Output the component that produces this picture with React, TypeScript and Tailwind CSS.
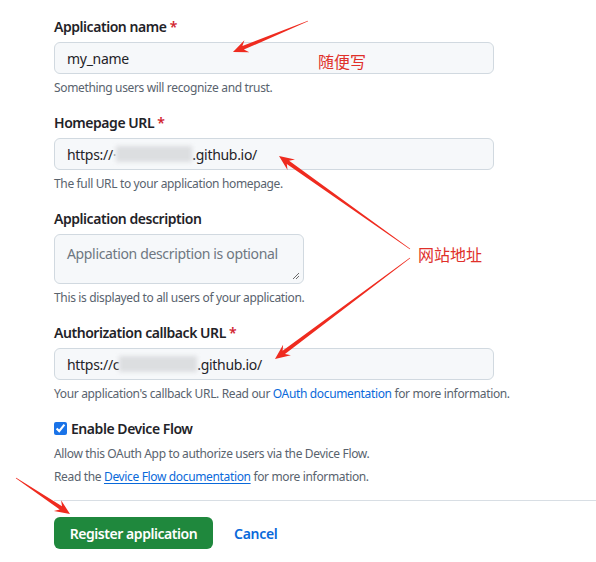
import React from "react";

const font = { fontFamily: '"Noto Sans", "Noto Sans CJK SC", sans-serif' };

type Pt = [number, number];

// tapered red annotation arrow, tail -> tip
const arrowPoints = (tail: Pt, tip: Pt, shaft = 4, headLen = 15, headW = 13) => {
  const dx = tip[0] - tail[0];
  const dy = tip[1] - tail[1];
  const len = Math.hypot(dx, dy);
  const ux = dx / len;
  const uy = dy / len;
  const nx = -uy;
  const ny = ux;
  const bx = tip[0] - ux * headLen;
  const by = tip[1] - uy * headLen;
  const nb = tip[0] - ux * (headLen - 4);
  const nbY = tip[1] - uy * (headLen - 4);
  const p = (x: number, y: number) => `${x.toFixed(1)},${y.toFixed(1)}`;
  return [
    p(tail[0] + nx * 0.3, tail[1] + ny * 0.3),
    p(nb + (nx * shaft) / 2, nbY + (ny * shaft) / 2),
    p(bx + (nx * headW) / 2, by + (ny * headW) / 2),
    p(tip[0], tip[1]),
    p(bx - (nx * headW) / 2, by - (ny * headW) / 2),
    p(nb - (nx * shaft) / 2, nbY - (ny * shaft) / 2),
    p(tail[0] - nx * 0.3, tail[1] - ny * 0.3),
  ].join(" ");
};

const Arrows = () => (
  <svg className="absolute inset-0 pointer-events-none" width={596} height={562}>
    <polygon points={arrowPoints([308, 21], [233, 52])} fill="#ef2b1f" />
    <polygon points={arrowPoints([410, 249], [279, 156])} fill="#ef2b1f" />
    <polygon points={arrowPoints([410, 258], [275, 359])} fill="#ef2b1f" />
    <polygon points={arrowPoints([16, 478], [70, 514])} fill="#ef2b1f" />
  </svg>
);

const Label = ({ text, required }: { text: string; required?: boolean }) => (
  <div className="text-[14px] leading-[21px] font-semibold tracking-[-0.45px] text-[#1f2328]">
    {text}
    {required && <span className="text-[#d1242f]"> *</span>}
  </div>
);

const Help = ({ children }: { children: React.ReactNode }) => (
  <div className="mt-[5px] text-[12px] leading-[18px] tracking-[-0.35px] text-[#59636e]">{children}</div>
);

const Blur = ({ w }: { w: number }) => (
  <span
    className="inline-block h-[16px] align-middle bg-[#dcdee0] blur-[2px]"
    style={{ width: w }}
  />
);

const Input = ({ children }: { children: React.ReactNode }) => (
  <div className="mt-[5px] flex items-center w-[440px] h-[32px] px-[12px] rounded-[6px] border border-[#d1d9e0] bg-[#f6f8fa] text-[14px] tracking-[-0.3px] text-[#1f2328]">
    {children}
  </div>
);

export default function App() {
  return (
    <div className="relative w-[596px] h-[562px] bg-white overflow-hidden" style={font}>
      <div className="pl-[54px] pt-[16px]">
        <Label text="Application name" required />
        <Input>my_name</Input>
        <Help>Something users will recognize and trust.</Help>

        <div className="mt-[15px]">
          <Label text="Homepage URL" required />
          <Input>
            <span>https://</span>
            <span className="text-[#9aa0a6]">·</span>
            <Blur w={76} />
            <span>.github.io/</span>
          </Input>
          <Help>The full URL to your application homepage.</Help>
        </div>

        <div className="mt-[15px]">
          <Label text="Application description" />
          <div className="relative mt-[5px] w-[250px] h-[50px] rounded-[6px] border border-[#d1d9e0] bg-[#f6f8fa] px-[12px] pt-[8px] text-[14px] tracking-[-0.35px] text-[#6e7781]">
            Application description is optional
            <svg className="absolute right-[3px] bottom-[3px]" width="8" height="8" viewBox="0 0 8 8">
              <path d="M1 7 L7 1 M4 7 L7 4" stroke="#6b6b6b" strokeWidth="1" />
            </svg>
          </div>
          <Help>This is displayed to all users of your application.</Help>
        </div>

        <div className="mt-[15px]">
          <Label text="Authorization callback URL" required />
          <Input>
            <span>https://c</span>
            <Blur w={78} />
            <span>.github.io/</span>
          </Input>
          <Help>
            Your application's callback URL. Read our{" "}
            <span className="text-[#0969da]">OAuth documentation</span> for more information.
          </Help>
        </div>

        <div className="mt-[15px] flex items-center gap-[4px]">
          <input type="checkbox" defaultChecked readOnly className="w-[13px] h-[13px] m-0 accent-[#1a73e8]" />
          <span className="text-[14px] leading-[21px] font-semibold tracking-[-0.45px] text-[#1f2328]">Enable Device Flow</span>
        </div>
        <div className="mt-[6px] text-[12px] leading-[18px] tracking-[-0.35px] text-[#59636e]">
          Allow this OAuth App to authorize users via the Device Flow.
        </div>
        <div className="mt-[5px] text-[12px] leading-[18px] tracking-[-0.35px] text-[#59636e]">
          Read the{" "}
          <span className="text-[#0969da] underline underline-offset-2">Device Flow documentation</span> for more
          information.
        </div>

        <div className="mt-[14px] border-t border-[#d8dee4]" />

        <div className="mt-[16px] flex items-center gap-[21px]">
          <div className="h-[32px] w-[159px] flex items-center justify-center rounded-[6px] bg-[#1f883d] text-white text-[14px] font-semibold tracking-[-0.45px]">
            Register application
          </div>
          <span className="text-[14px] font-semibold tracking-[-0.3px] text-[#0969da]">Cancel</span>
        </div>
      </div>

      <Arrows />
      <div className="absolute left-[318px] top-[50px] text-[16px] leading-[24px] text-[#e0302a]">随便写</div>
      <div className="absolute left-[418px] top-[243px] text-[16px] leading-[24px] text-[#e0302a]">网站地址</div>
    </div>
  );
}
